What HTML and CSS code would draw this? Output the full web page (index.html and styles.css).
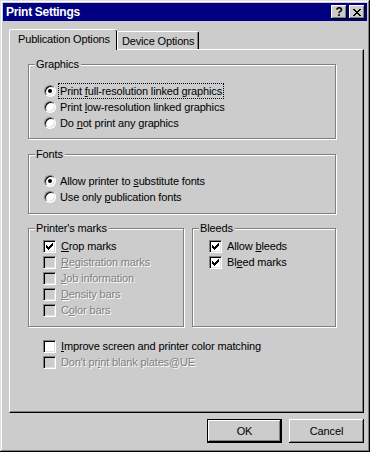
FILE: index.html
```html
<!DOCTYPE html>
<html lang="en">
<head>
    <meta charset="UTF-8">
    <title>Print Settings</title>
    <link rel="stylesheet" href="styles.css">
</head>
<body>
    <div class="janela">
        <div class="titulo">
            <span class="titulo-texto">Print Settings</span>
            <div class="titulo-botoes">
                <span class="tb-botao tb-ajuda">?</span>
                <span class="tb-botao">
                    <svg width="8" height="7" viewBox="0 0 8 7"><path d="M0 0h2v1H0zM6 0h2v1H6zM1 1h2v1H1zM5 1h2v1H5zM2 2h4v1H2zM3 3h2v1H3zM2 4h4v1H2zM1 5h2v1H1zM5 5h2v1H5zM0 6h2v1H0zM6 6h2v1H6z" fill="#000"/></svg>
                </span>
            </div>
        </div>
        <div class="conteudo">
            <div class="abas">
                <div class="aba ativa">Publication Options</div>
                <div class="aba">Device Options</div>
            </div>
            <div class="painel">
                <div class="grupo grupo-graficos">
                    <span class="grupo-rotulo">Graphics</span>
                    <div class="linha"><span class="radio marcado"></span><span class="texto foco">Print <u>f</u>ull-resolution linked graphics</span></div>
                    <div class="linha"><span class="radio"></span><span class="texto">Print <u>l</u>ow-resolution linked graphics</span></div>
                    <div class="linha"><span class="radio"></span><span class="texto">Do <u>n</u>ot print any graphics</span></div>
                </div>
                <div class="grupo grupo-fontes">
                    <span class="grupo-rotulo">Fonts</span>
                    <div class="linha"><span class="radio marcado"></span><span class="texto">Allow printer to <u>s</u>ubstitute fonts</span></div>
                    <div class="linha"><span class="radio"></span><span class="texto">Use only <u>p</u>ublication fonts</span></div>
                </div>
                <div class="grupos-lado">
                    <div class="grupo grupo-marcas">
                        <span class="grupo-rotulo">Printer's marks</span>
                        <div class="linha"><span class="check marcado"><svg width="7" height="7" viewBox="0 0 7 7"><path d="M0 2h1v3H0zM1 3h1v3H1zM2 4h1v3H2zM3 3h1v3H3zM4 2h1v3H4zM5 1h1v3H5zM6 0h1v3H6z" fill="#000"/></svg></span><span class="texto"><u>C</u>rop marks</span></div>
                        <div class="linha desabilitado"><span class="check"></span><span class="texto"><u>R</u>egistration marks</span></div>
                        <div class="linha desabilitado"><span class="check"></span><span class="texto"><u>J</u>ob information</span></div>
                        <div class="linha desabilitado"><span class="check"></span><span class="texto"><u>D</u>ensity bars</span></div>
                        <div class="linha desabilitado"><span class="check"></span><span class="texto">C<u>o</u>lor bars</span></div>
                    </div>
                    <div class="grupo grupo-sangria">
                        <span class="grupo-rotulo">Bleeds</span>
                        <div class="linha"><span class="check marcado"><svg width="7" height="7" viewBox="0 0 7 7"><path d="M0 2h1v3H0zM1 3h1v3H1zM2 4h1v3H2zM3 3h1v3H3zM4 2h1v3H4zM5 1h1v3H5zM6 0h1v3H6z" fill="#000"/></svg></span><span class="texto">Allow <u>b</u>leeds</span></div>
                        <div class="linha"><span class="check marcado"><svg width="7" height="7" viewBox="0 0 7 7"><path d="M0 2h1v3H0zM1 3h1v3H1zM2 4h1v3H2zM3 3h1v3H3zM4 2h1v3H4zM5 1h1v3H5zM6 0h1v3H6z" fill="#000"/></svg></span><span class="texto">Bl<u>e</u>ed marks</span></div>
                    </div>
                </div>
                <div class="extras">
                    <div class="linha"><span class="check"></span><span class="texto"><u>I</u>mprove screen and printer color matching</span></div>
                    <div class="linha desabilitado"><span class="check"></span><span class="texto">Don't pr<u>i</u>nt blank plates@UE</span></div>
                </div>
            </div>
            <div class="botoes">
                <div class="botao padrao"><span>OK</span></div>
                <div class="botao"><span>Cancel</span></div>
            </div>
        </div>
    </div>
</body>
</html>
```

FILE: styles.css
```css
* {
    box-sizing: border-box;
    margin: 0;
    padding: 0;
    font-family: 'Liberation Sans', Arial, sans-serif;
}

body {
    background-color: #cccccc;
    color: #000;
    font-size: 11px;
    letter-spacing: -0.15px;
}

.janela {
    width: 370px;
    height: 452px;
    padding: 3px;
    background-color: #cccccc;
    box-shadow: inset -1px -1px #000, inset 1px 1px #dfdfdf, inset -2px -2px #808080, inset 2px 2px #fff;
}

.titulo {
    height: 18px;
    background-color: #000080;
    display: flex;
    align-items: center;
    justify-content: space-between;
    padding: 0 2px 0 3px;
}

.titulo-texto {
    color: #fff;
    font-weight: bold;
    font-size: 12px;
    letter-spacing: -0.3px;
}

.titulo-botoes {
    display: flex;
    gap: 2px;
}

.tb-botao {
    width: 16px;
    height: 14px;
    background-color: #cccccc;
    box-shadow: inset -1px -1px #000, inset 1px 1px #fff, inset -2px -2px #808080;
    display: flex;
    align-items: center;
    justify-content: center;
}

.tb-ajuda {
    font-weight: bold;
    font-size: 12px;
    line-height: 14px;
}

.conteudo {
    padding: 8px 3px 0 6px;
}

.abas {
    display: flex;
    align-items: flex-end;
    height: 20px;
    position: relative;
    z-index: 1;
}

.aba {
    height: 18px;
    padding: 0 4px;
    line-height: 18px;
    border-top: 1px solid #fff;
    border-left: 1px solid #fff;
    border-right: 1px solid #000;
    border-radius: 2px 2px 0 0;
    box-shadow: inset -1px 0 #808080;
}

.aba.ativa {
    height: 21px;
    margin-bottom: -1px;
    padding: 0 7px 0 8px;
    line-height: 19px;
    background-color: #cccccc;
    border-right: none;
    box-shadow: -1px 0 0 #000 inset;
}

.painel {
    height: 364px;
    padding: 14px 0 0 18px;
    border-top: 1px solid #fff;
    border-left: 1px solid #fff;
    border-right: 1px solid #000;
    border-bottom: 1px solid #000;
    box-shadow: inset -1px -1px #808080;
}

.grupo {
    position: relative;
    border: 1px solid #808080;
    box-shadow: inset 1px 1px #fff, 1px 1px #fff;
}

.grupo-rotulo {
    position: absolute;
    top: -8px;
    left: 6px;
    padding: 0 2px 0 1px;
    line-height: 14px;
    background-color: #cccccc;
}

.grupo-graficos {
    width: 308px;
    height: 75px;
    padding: 18px 0 0 15px;
}

.grupo-fontes {
    width: 308px;
    height: 60px;
    margin-top: 15px;
    padding: 18px 0 0 15px;
}

.grupos-lado {
    display: flex;
    gap: 8px;
    margin-top: 14px;
}

.grupo-marcas {
    width: 156px;
    height: 99px;
    padding: 9px 0 0 14px;
}

.grupo-sangria {
    width: 144px;
    height: 99px;
    padding: 9px 0 0 16px;
}

.extras {
    margin-top: 11px;
    padding-left: 15px;
}

.linha {
    display: flex;
    align-items: center;
    height: 16px;
    white-space: nowrap;
}

.radio {
    width: 12px;
    height: 12px;
    border-radius: 50%;
    background-color: #fff;
    border: 1px solid;
    border-color: #808080 #fff #fff #808080;
    box-shadow: inset 1px 1px #000, inset -1px -1px #dfdfdf;
    display: flex;
    align-items: center;
    justify-content: center;
    margin-right: 2px;
}

.radio.marcado::after {
    content: "";
    width: 4px;
    height: 4px;
    border-radius: 50%;
    background-color: #000;
}

.check {
    width: 13px;
    height: 13px;
    background-color: #fff;
    border: 1px solid;
    border-color: #808080 #fff #fff #808080;
    box-shadow: inset 1px 1px #000, inset -1px -1px #dfdfdf;
    display: flex;
    align-items: center;
    justify-content: center;
    margin-right: 3px;
}

.texto {
    padding: 0 1px;
    line-height: 14px;
    border: 1px solid transparent;
}

.texto.foco {
    border: 1px dotted #000;
}

.desabilitado .check {
    background-color: #cccccc;
}

.desabilitado .texto {
    color: #808080;
    text-shadow: 1px 1px #fff;
}

.botoes {
    display: flex;
    justify-content: flex-end;
    gap: 7px;
    margin-top: 6px;
}

.botao {
    width: 75px;
    height: 24px;
    display: flex;
    align-items: center;
    justify-content: center;
    background-color: #cccccc;
    box-shadow: inset -1px -1px #000, inset 1px 1px #fff, inset -2px -2px #808080;
}

.botao.padrao {
    border: 1px solid #000;
}
```
